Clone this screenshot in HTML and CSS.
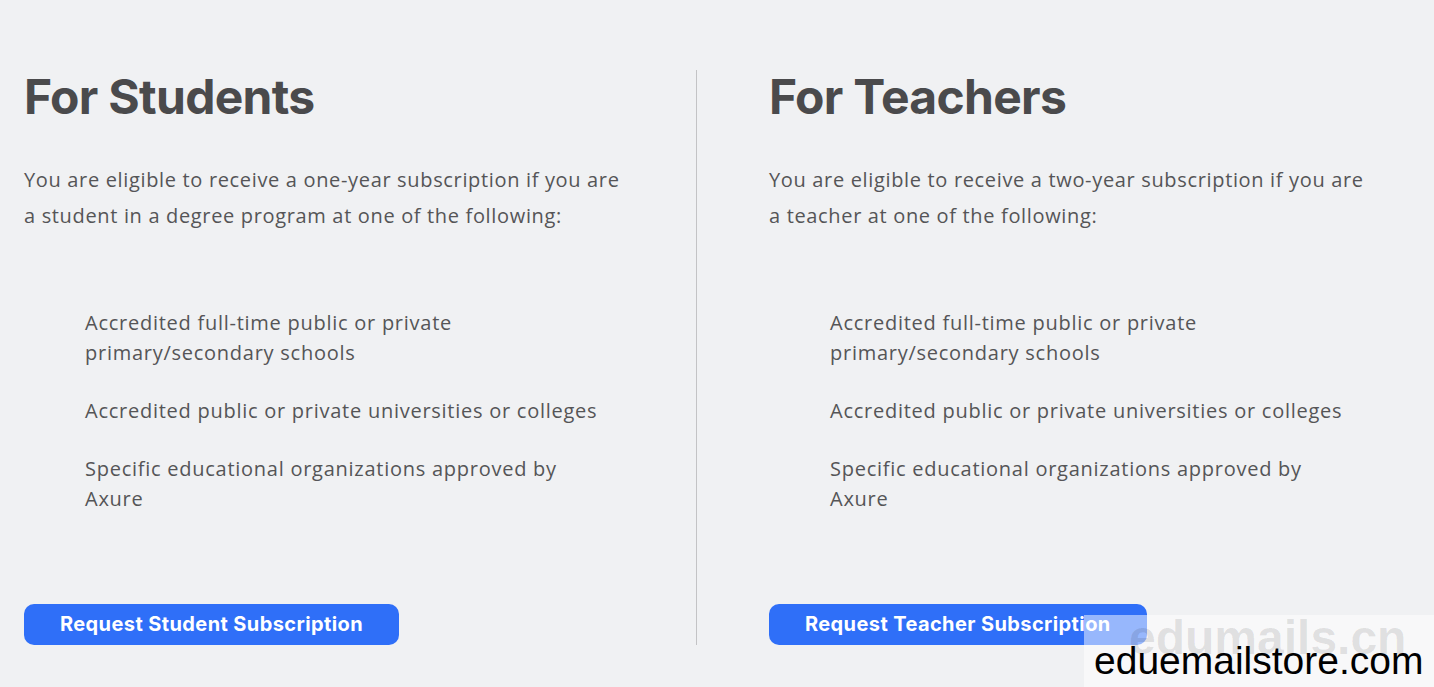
FILE: index.html
```html
<!DOCTYPE html>
<html lang="en">
<head>
<meta charset="utf-8">
<title>Axure Education</title>
<link rel="stylesheet" href="styles.css">
</head>
<body>
<main class="plans">
  <section class="plan">
    <h2 class="plan-title">For Students</h2>
    <p class="plan-text">You are eligible to receive a one-year subscription if you are a student in a degree program at one of the following:</p>
    <ul class="plan-list">
      <li>Accredited full-time public or private primary/secondary schools</li>
      <li>Accredited public or private universities or colleges</li>
      <li>Specific educational organizations approved by Axure</li>
    </ul>
    <a class="plan-btn" href="#">Request Student Subscription</a>
  </section>
  <div class="divider"></div>
  <section class="plan">
    <h2 class="plan-title">For Teachers</h2>
    <p class="plan-text">You are eligible to receive a two-year subscription if you are a teacher at one of the following:</p>
    <ul class="plan-list">
      <li>Accredited full-time public or private primary/secondary schools</li>
      <li>Accredited public or private universities or colleges</li>
      <li>Specific educational organizations approved by Axure</li>
    </ul>
    <a class="plan-btn" href="#">Request Teacher Subscription</a>
  </section>
</main>
<div class="watermark">
  <span class="wm-back">edumails.cn</span>
  <span class="wm-front">eduemailstore.com</span>
</div>
</body>
</html>
```
FILE: styles.css
```css
html, body {
  margin: 0;
  padding: 0;
}
body {
  background: #f0f1f3;
  font-family: "Open Sans", "DejaVu Sans", sans-serif;
  color: #555557;
  min-height: 687px;
  position: relative;
  overflow: hidden;
}
.plans {
  display: flex;
  align-items: stretch;
  padding: 70px 0 0 24px;
}
.plan {
  width: 600px;
  display: flex;
  flex-direction: column;
  align-items: flex-start;
}
.divider {
  width: 1px;
  background: #c3c3c5;
  margin: 0 72px;
}
.plan-title {
  font-family: "Inter", "Open Sans", sans-serif;
  font-weight: 700;
  font-size: 48px;
  line-height: 54px;
  color: #4a4a4c;
  margin: 0;
  letter-spacing: -0.7px;
}
.plan-text {
  font-size: 20px;
  line-height: 36px;
  letter-spacing: 0.66px;
  margin: 38px 0 0;
}
.plan-list {
  list-style: none;
  margin: 74px 0 0;
  padding: 0 0 0 61px;
  font-size: 20px;
  line-height: 30px;
  letter-spacing: 0.74px;
  width: 526px;
  box-sizing: content-box;
}
.plan-list li + li {
  margin-top: 28px;
}
.plan-btn {
  margin-top: 90px;
  display: inline-block;
  background: #2f6ff8;
  color: #fff;
  text-decoration: none;
  font-family: "Inter", "Open Sans", sans-serif;
  font-weight: 700;
  font-size: 20px;
  line-height: 41px;
  letter-spacing: 0.4px;
  padding: 0 36px;
  border-radius: 10px;
}
.watermark {
  position: absolute;
  left: 1084px;
  top: 615px;
  width: 350px;
  height: 72px;
  background: rgba(255, 255, 255, 0.5);
}
.wm-back {
  position: absolute;
  left: 45px;
  top: -5px;
  font-family: "Liberation Sans", Arial, sans-serif;
  font-weight: 700;
  font-size: 48px;
  line-height: 55px;
  color: rgba(0, 0, 0, 0.1);
  white-space: nowrap;
}
.wm-front {
  position: absolute;
  left: 10px;
  top: 24px;
  font-family: "Liberation Sans", Arial, sans-serif;
  font-size: 39px;
  line-height: 44px;
  color: #000;
  white-space: nowrap;
}
```
